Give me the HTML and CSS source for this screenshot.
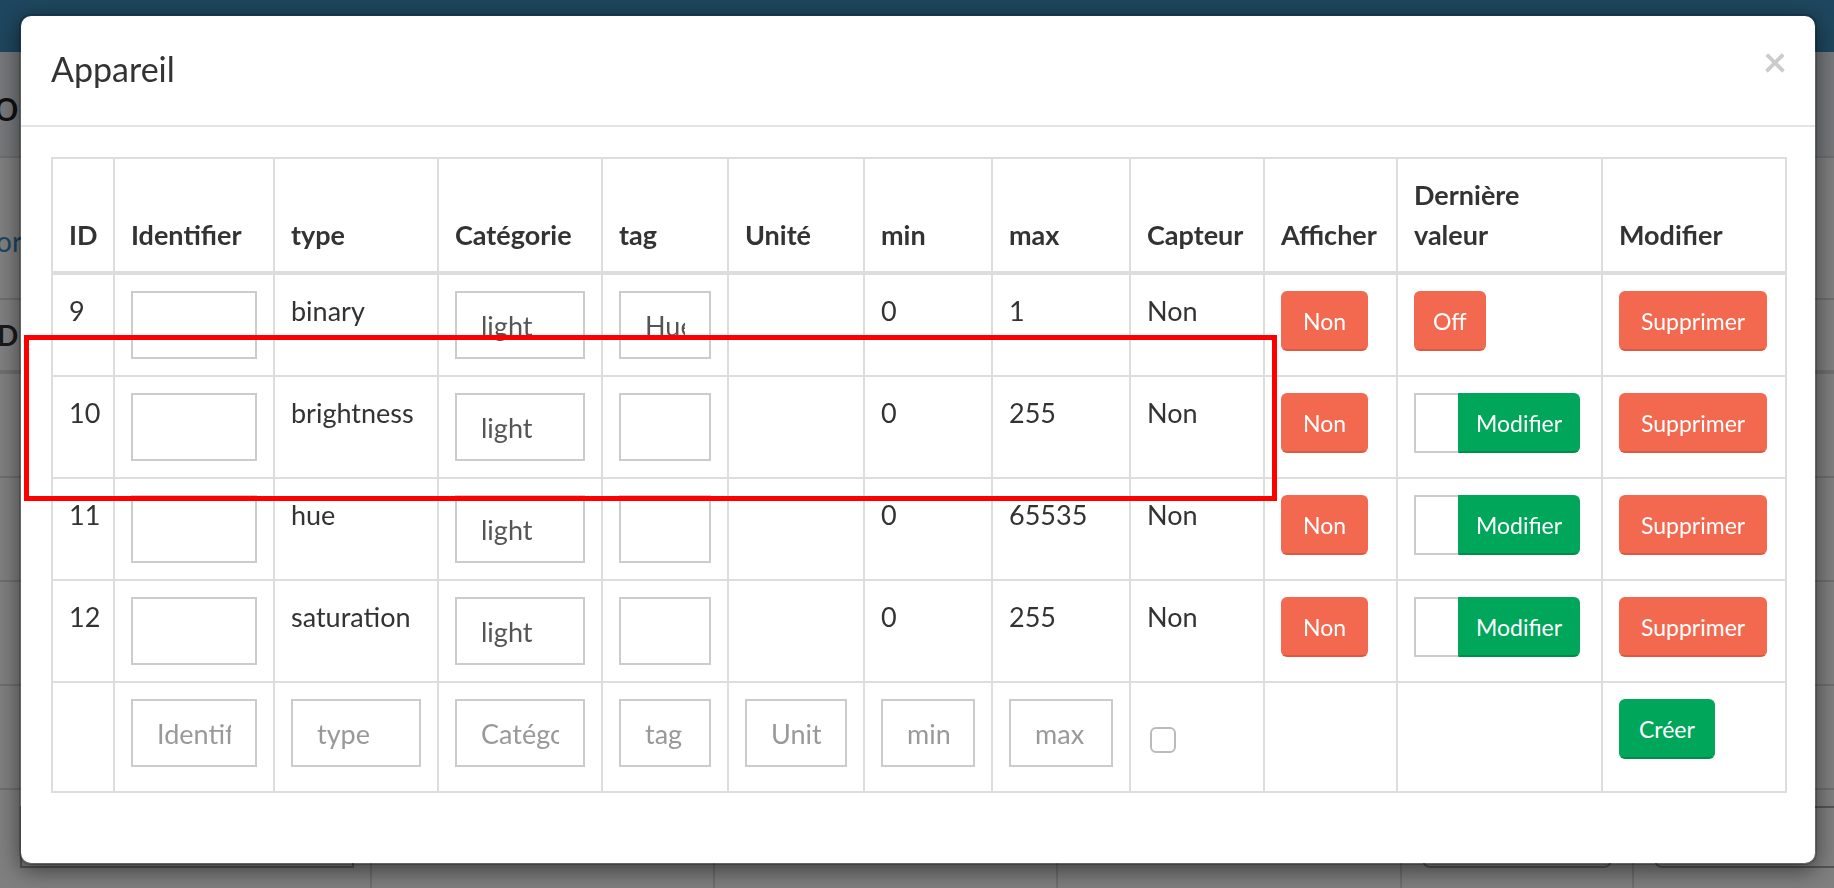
FILE: index.html
```html
<!DOCTYPE html>
<html lang="fr">
<head>
<meta charset="utf-8">
<title>Appareil</title>
<link rel="stylesheet" href="styles.css">
</head>
<body>
<div class="page">
  <div class="navbar"></div>
  <div class="page-title">op</div>
  <div class="bg-box">
    <div class="bg-bar"><span class="bg-link">or</span></div>
    <div class="bg-row bg-head"><span class="bg-id">D</span></div>
    <div class="bg-row"></div>
    <div class="bg-row"></div>
    <div class="bg-row"></div>
    <div class="bg-row"></div>
    <div class="bg-row bg-cols">
      <div class="bg-cell"><span class="bg-input"></span></div>
      <div class="bg-cell"></div>
      <div class="bg-cell"></div>
      <div class="bg-cell"></div>
      <div class="bg-cell"><span class="bg-btn"></span></div>
      <div class="bg-cell"><span class="bg-btn"></span></div>
    </div>
  </div>
</div>

<div class="backdrop"></div>

<div class="modal">
  <div class="modal-header">
    <h4 class="modal-title">Appareil</h4>
    <button class="close" type="button">×</button>
  </div>
  <div class="modal-body">
    <table class="grid">
      <colgroup>
        <col class="c-id"><col class="c-ident"><col class="c-type"><col class="c-cat"><col class="c-tag"><col class="c-unit"><col class="c-min"><col class="c-max"><col class="c-capt"><col class="c-aff"><col class="c-last"><col class="c-mod">
      </colgroup>
      <thead>
        <tr>
          <th>ID</th><th>Identifier</th><th>type</th><th>Catégorie</th><th>tag</th><th>Unité</th><th>min</th><th>max</th><th>Capteur</th><th>Afficher</th><th>Dernière valeur</th><th>Modifier</th>
        </tr>
      </thead>
      <tbody>
        <tr>
          <td>9</td>
          <td><input class="fc" type="text" value=""></td>
          <td>binary</td>
          <td><input class="fc" type="text" value="light"></td>
          <td><input class="fc" type="text" value="Hue"></td>
          <td></td>
          <td>0</td>
          <td>1</td>
          <td>Non</td>
          <td><button class="btn btn-danger" type="button">Non</button></td>
          <td><button class="btn btn-danger btn-off" type="button">Off</button></td>
          <td><button class="btn btn-danger" type="button">Supprimer</button></td>
        </tr>
        <tr>
          <td>10</td>
          <td><input class="fc" type="text" value=""></td>
          <td>brightness</td>
          <td><input class="fc" type="text" value="light"></td>
          <td><input class="fc" type="text" value=""></td>
          <td></td>
          <td>0</td>
          <td>255</td>
          <td>Non</td>
          <td><button class="btn btn-danger" type="button">Non</button></td>
          <td><div class="ig"><input class="ig-input" type="text" value=""><button class="btn btn-success ig-btn" type="button">Modifier</button></div></td>
          <td><button class="btn btn-danger" type="button">Supprimer</button></td>
        </tr>
        <tr>
          <td>11</td>
          <td><input class="fc" type="text" value=""></td>
          <td>hue</td>
          <td><input class="fc" type="text" value="light"></td>
          <td><input class="fc" type="text" value=""></td>
          <td></td>
          <td>0</td>
          <td>65535</td>
          <td>Non</td>
          <td><button class="btn btn-danger" type="button">Non</button></td>
          <td><div class="ig"><input class="ig-input" type="text" value=""><button class="btn btn-success ig-btn" type="button">Modifier</button></div></td>
          <td><button class="btn btn-danger" type="button">Supprimer</button></td>
        </tr>
        <tr>
          <td>12</td>
          <td><input class="fc" type="text" value=""></td>
          <td>saturation</td>
          <td><input class="fc" type="text" value="light"></td>
          <td><input class="fc" type="text" value=""></td>
          <td></td>
          <td>0</td>
          <td>255</td>
          <td>Non</td>
          <td><button class="btn btn-danger" type="button">Non</button></td>
          <td><div class="ig"><input class="ig-input" type="text" value=""><button class="btn btn-success ig-btn" type="button">Modifier</button></div></td>
          <td><button class="btn btn-danger" type="button">Supprimer</button></td>
        </tr>
        <tr class="new-row">
          <td></td>
          <td><input class="fc" type="text" placeholder="Identifier"></td>
          <td><input class="fc" type="text" placeholder="type"></td>
          <td><input class="fc" type="text" placeholder="Catégorie"></td>
          <td><input class="fc" type="text" placeholder="tag"></td>
          <td><input class="fc" type="text" placeholder="Unité"></td>
          <td><input class="fc" type="text" placeholder="min"></td>
          <td><input class="fc" type="text" placeholder="max"></td>
          <td><input class="chk" type="checkbox"></td>
          <td></td>
          <td></td>
          <td><button class="btn btn-success btn-create" type="button">Créer</button></td>
        </tr>
      </tbody>
    </table>
  </div>
</div>

<div class="annot"></div>
</body>
</html>
```

FILE: styles.css
```css
* { box-sizing: border-box; }

html, body {
  margin: 0;
  height: 100%;
}

body {
  font-family: Lato, "Noto Sans", sans-serif;
  font-size: 27px;
  color: #333;
  background: #ecf0f5;
  overflow: hidden;
}

/* ---------- background page (under the backdrop) ---------- */
.page {
  width: 100%;
}

.navbar {
  height: 52px;
  background: #3c8dbc;
}

.page-title {
  height: 104px;
  margin-left: -6px;
  font-size: 44px;
  line-height: 104px;
  color: #222;
}

.bg-box {
  background: #fff;
  border-top: 2px solid #ddd;
}

.bg-bar {
  height: 142px;
  padding-top: 66px;
  border-bottom: 2px solid #ddd;
}

.bg-link {
  margin-left: -4px;
  color: #3c8dbc;
  font-size: 28px;
}

.bg-row {
  height: 104px;
  border-bottom: 2px solid #ddd;
}

.bg-head {
  height: 74px;
  padding-top: 18px;
  border-bottom-width: 4px;
}

.bg-id {
  margin-left: -3px;
  font-weight: 700;
  font-size: 28px;
}

.bg-cols {
  display: grid;
  grid-template-columns: 372px 343px 343px 344px 232px 1fr;
}

.bg-cell {
  border-right: 2px solid #ddd;
  padding: 16px 16px 0 20px;
}

.bg-input {
  display: block;
  height: 62px;
  border: 2px solid #aaa;
}

.bg-btn {
  display: block;
  width: 190px;
  height: 62px;
  border: 2px solid #aaa;
  border-radius: 8px;
}

.backdrop {
  position: fixed;
  inset: 0;
  background: rgba(0, 0, 0, 0.5);
}

/* ---------- modal ---------- */
.modal {
  position: fixed;
  left: 19px;
  top: 14px;
  width: 1798px;
  background: #fff;
  background-clip: padding-box;
  border: 2px solid rgba(0, 0, 0, 0.2);
  border-radius: 12px;
  box-shadow: 0 6px 22px rgba(0, 0, 0, 0.5);
}

.modal-header {
  display: flex;
  justify-content: space-between;
  align-items: flex-start;
  padding: 30px;
  border-bottom: 2px solid #e5e5e5;
}

.modal-title {
  margin: -2px 0 2px;
  font-size: 34px;
  font-weight: 400;
  line-height: 49px;
  color: #333;
}

.close {
  padding: 0;
  margin: -6px -2px 0 0;
  border: 0;
  background: none;
  font-family: inherit;
  font-size: 42px;
  font-weight: 700;
  line-height: 1;
  color: #000;
  opacity: 0.2;
}

.modal-body {
  padding: 30px;
}

.grid {
  width: 100%;
  table-layout: fixed;
  border-collapse: collapse;
  margin-bottom: 40px;
}

.c-id { width: 62px; }
.c-ident { width: 160px; }
.c-type { width: 164px; }
.c-cat { width: 164px; }
.c-tag { width: 126px; }
.c-unit { width: 136px; }
.c-min { width: 128px; }
.c-max { width: 138px; }
.c-capt { width: 134px; }
.c-aff { width: 133px; }
.c-last { width: 205px; }
.c-mod { width: 184px; }

.grid th,
.grid td {
  border: 2px solid #ddd;
  padding: 16px;
  text-align: left;
  vertical-align: top;
  line-height: 40px;
}

.grid thead th {
  vertical-align: bottom;
  border-bottom-width: 4px;
  font-weight: 700;
}

.grid .new-row td {
  padding-bottom: 24px;
}

.fc {
  display: block;
  width: 100%;
  height: 68px;
  padding: 12px 24px;
  border: 2px solid #ccc;
  border-radius: 0;
  background: #fff;
  font-family: inherit;
  font-size: 27px;
  color: #555;
  outline: none;
}

.fc::placeholder {
  color: #999;
}

.btn {
  display: inline-block;
  padding: 10px 20px;
  border: 2px solid transparent;
  border-radius: 6px;
  font-family: inherit;
  font-size: 23px;
  line-height: 36px;
  color: #fff;
  white-space: nowrap;
}

.btn-danger {
  background: #f3694f;
  border-color: #f3694f;
  border-bottom-color: #dc5a41;
}

.btn-success {
  background: #00a65a;
  border-color: #00a65a;
  border-bottom-color: #008d4c;
}

.btn-off {
  padding: 10px 17px;
}

.btn-create {
  padding: 10px 18px;
}

.ig {
  display: flex;
}

.ig-input {
  width: 44px;
  height: 60px;
  padding: 0;
  border: 2px solid #ccc;
  border-right: 0;
  background: #fff;
  outline: none;
}

.ig-btn {
  padding: 10px 16px;
  border-radius: 0 6px 6px 0;
}

.chk {
  appearance: none;
  -webkit-appearance: none;
  display: block;
  width: 26px;
  height: 26px;
  margin: 28px 0 0 3px;
  border: 2px solid #bbb;
  border-radius: 6px;
  background: #fff;
}

/* ---------- annotation rectangle ---------- */
.annot {
  position: fixed;
  left: 24px;
  top: 335px;
  width: 1253px;
  height: 166px;
  border: 5px solid #f00;
}
```
